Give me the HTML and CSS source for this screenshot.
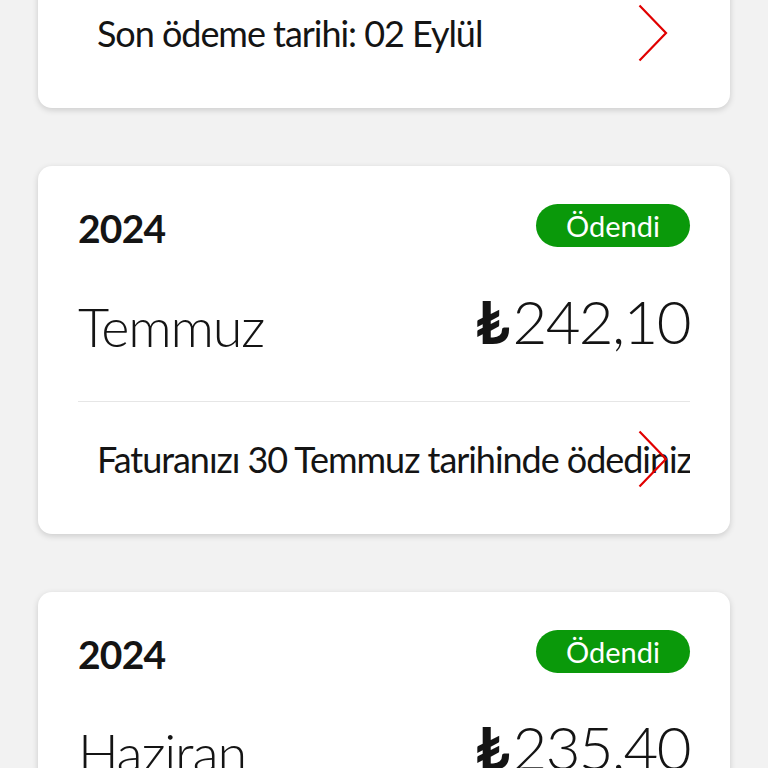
FILE: index.html
```html
<!DOCTYPE html>
<html lang="tr">
<head>
    <meta charset="UTF-8">
    <meta name="viewport" content="width=device-width, initial-scale=1.0">
    <title>Faturalarım</title>
    <link rel="stylesheet" href="styles.css">
</head>
<body>
    <div class="bill-list">
        <div class="bill-card">
            <div class="bill-footer">
                <div class="footer-row">
                    <div class="footer-text">Son ödeme tarihi: 02 Eylül</div>
                    <svg class="chevron" viewBox="0 0 30 58"><path d="M1.5 1.5 L28 29 L1.5 56.5"/></svg>
                </div>
            </div>
        </div>

        <div class="bill-card">
            <div class="bill-head">
                <div class="bill-year">2024</div>
                <div class="status-paid">Ödendi</div>
            </div>
            <div class="bill-main">
                <div class="bill-month">Temmuz</div>
                <div class="bill-amount"><span class="lira">₺</span>242,10</div>
            </div>
            <div class="bill-footer">
                <div class="footer-row">
                    <div class="footer-text">Faturanızı 30 Temmuz tarihinde ödediniz</div>
                    <svg class="chevron" viewBox="0 0 30 58"><path d="M1.5 1.5 L28 29 L1.5 56.5"/></svg>
                </div>
            </div>
        </div>

        <div class="bill-card">
            <div class="bill-head">
                <div class="bill-year">2024</div>
                <div class="status-paid">Ödendi</div>
            </div>
            <div class="bill-main">
                <div class="bill-month">Haziran</div>
                <div class="bill-amount"><span class="lira">₺</span>235,40</div>
            </div>
        </div>
    </div>
</body>
</html>
```

FILE: styles.css
```css
body {
    background-color: #f2f2f2;
    font-family: Lato, 'Open Sans', sans-serif;
    color: #141414;
    margin: 0;
    height: 768px;
    overflow: hidden;
}

.bill-list {
    display: flex;
    flex-direction: column;
    gap: 58px;
    padding: 0 38px;
    margin-top: -24px;
}

.bill-card {
    background-color: white;
    border-radius: 14px;
    padding: 0 40px;
    box-shadow: 0 2px 6px rgba(0, 0, 0, 0.16);
}

.bill-head {
    display: flex;
    justify-content: space-between;
    align-items: flex-start;
    padding-top: 38px;
}

.bill-year {
    font-size: 39px;
    font-weight: 700;
    line-height: 43px;
    padding-top: 3px;
    letter-spacing: -0.8px;
}

.status-paid {
    background-color: #0a990a;
    color: white;
    font-size: 29px;
    height: 43px;
    line-height: 43px;
    padding: 0 30px;
    border-radius: 22px;
}

.bill-main {
    display: flex;
    justify-content: space-between;
    align-items: flex-start;
    margin-top: 47px;
    padding-bottom: 44px;
    border-bottom: 1px solid #e6e6e6;
    font-weight: 300;
}

.bill-month {
    font-size: 54px;
    line-height: 60px;
    letter-spacing: -1.2px;
}

.bill-amount {
    font-size: 60px;
    line-height: 48px;
    letter-spacing: -1.6px;
}

.lira {
    font-weight: 700;
    margin-right: 4px;
}

/* alt satir: metin + kirmizi ok */
.bill-footer {
    padding: 37px 0 55px 19px;
}

.footer-row {
    position: relative;
}

.footer-text {
    font-size: 36px;
    line-height: 40px;
    letter-spacing: -1.05px;
    white-space: nowrap;
    overflow: hidden;
}

.chevron {
    position: absolute;
    right: 22px;
    top: 50%;
    margin-top: -29px;
    width: 30px;
    height: 58px;
    fill: none;
    stroke: #e10000;
    stroke-width: 2.2;
}
```
